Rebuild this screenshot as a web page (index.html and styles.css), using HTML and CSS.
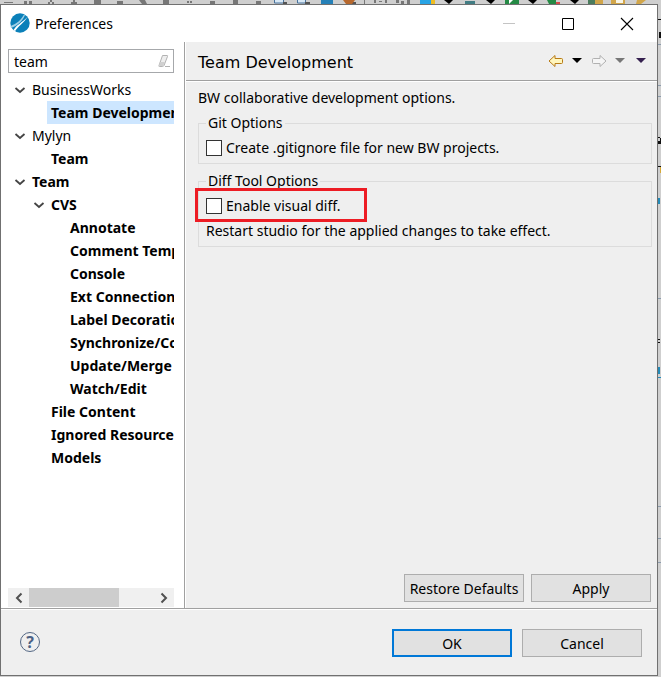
FILE: index.html
```html
<!DOCTYPE html>
<html lang="en">
<head>
<meta charset="utf-8">
<meta name="viewport" content="width=device-width, initial-scale=1">
<title>Preferences</title>
<link rel="stylesheet" href="styles.css">
</head>
<body>
<svg class="backdrop-tools" width="661" height="4" aria-hidden="true">
  <g fill="#777">
    <path d="M4 2h9v1H4zM24 1h3v3h-3zM29 1h3v3h-3zM50 0h2v2h-2zM48 2h2v2h-2zM52 2h2v2h-2zM73 0h2v2h-2zM71 2h6v2h-6zM94 0h7v4h-7zM117 1h6v3h-6zM139 0h6l2 4h-5zM163 0h6v4h-6zM187 1h2v2h-2zM190 1h2v2h-2zM210 1h5v3h-5zM233 0h5v4h-5zM256 1h5v3h-5z"/>
    <path d="M364 0h1v4h-1zM374 0h2v3h-2zM379 1h3v1h-3zM385 0h2v3h-2zM396 0h3v3h-3zM401 1h3v3h-3zM407 0h3v4h-3z"/>
  </g>
  <path fill="#d8e8f5" stroke="#47719b" d="M274.500-1h9v4h-9zM297.500-1h8v4h-8z"/>
  <path fill="#555" d="M283 2h4v2h-4zM305 2h5v2h-5zM351 2h5v2h-5z"/>
  <path fill="#2681b8" d="M321 0h12v4h-12z"/>
  <path fill="#b7682d" d="M343 0h12l-3 4h-6z"/>
  <path fill="#28a4e5" d="M420 0h11v4h-11z"/>
  <path fill="#efbd22" d="M431 0h4v4h-4z"/>
  <path fill="#000" d="M444 0h9l-4 4zM486 0h9l-4 4zM528 0h9l-4 4zM570 0h9l-4 4z"/>
  <path fill="#427d84" d="M465 1h10v3h-10z"/>
  <path fill="#258a45" d="M505 0h14v4h-14zM547 0h9v4h-7z"/>
  <path fill="#fff" d="M509 0h4l-4 4z"/>
  <path fill="#d64a4a" d="M556 2h4v2h-4z"/>
  <path fill="#4b7c5d" d="M588 0h7v4h-7z"/>
  <path fill="#d2a64a" d="M595 0h8v4h-8zM611 0h14v4h-14zM637 0h9l-5 4h-5z"/>
  <path fill="#f8f5e8" d="M616 0h7v3h-7z"/>
</svg>
<svg class="backdrop-side" width="3" height="677" aria-hidden="true">
  <path fill="#111" d="M0 19h3v1H0zM1 32h2v6H1zM0 137h2v1H0zM2 138h1v6H2zM0 141h2v3H0zM0 166h3v1H0zM0 339h2v1H0zM0 342h2v1H0z"/>
  <path fill="#8b9bac" d="M0 44h3v1H0zM0 85h3v1H0zM0 96h3v1H0zM0 298h3v1H0zM0 506h3v1H0zM0 538h3v1H0zM0 562h3v1H0z"/>
  <path fill="#238bb8" d="M0 198h2v6H0zM0 367h2v7H0zM0 377h3v1H0z"/>
  <path fill="#d6aa3a" d="M2 167h1v6H2z"/>
</svg>
<main class="dialog">
  <header class="titlebar">
    <svg class="app-icon" width="20" height="20" viewBox="0 0 20 20" aria-hidden="true">
      <circle cx="10" cy="10" r="9.700" fill="#0b80b9"/>
      <path fill="#9fcfe6" d="M.5 13C7 10.500 11 7 14 1.500L15 2C12.500 8 8 12.500 1 15z"/>
      <path fill="#fff" d="M3.500 17C6 12.500 12 9.500 17.500 4C14 10 8 13 5 18.300z"/>
    </svg>
    <h1 class="window-title">Preferences</h1>
    <div class="window-controls">
      <button type="button" aria-label="Minimize" disabled><svg width="14" height="14"><path stroke="#c4c4c4" d="M1 6.500h12"/></svg></button>
      <button type="button" aria-label="Maximize"><svg width="14" height="14"><path fill="none" stroke="#000" d="M1.500 1.500h11v11h-11z"/></svg></button>
      <button type="button" aria-label="Close"><svg width="14" height="14"><path stroke="#000" stroke-width="1.100" d="M1 1l12 12M13 1L1 13"/></svg></button>
    </div>
  </header>

  <div class="content">
    <nav class="sidebar" aria-label="Preference pages">
      <div class="search">
        <input type="text" value="team" aria-label="Filter preferences">
        <button type="button" class="clear" aria-label="Clear filter">
          <svg width="14" height="14" viewBox="0 0 14 14"><path fill="#eee" stroke="#b2b2b2" d="M5.500 1.500h4.500q1 0 .5 1L7 11.500q-.5 1-1.500 1H2.500q-1 0-.5-1z"/><path fill="#d0d0d0" d="M3 8h5l-2 4H2z"/><path stroke="#b2b2b2" d="M8 12.500h5"/></svg>
        </button>
      </div>
      <ul class="tree">
        <li><div class="row"><svg class="chevron" viewBox="0 0 16 10"><path d="M3.500 3L8 7l4.500-4"/></svg><span class="label plain">BusinessWorks</span></div>
          <ul>
            <li><div class="row leaf"><span class="label selected">Team Development</span></div></li>
          </ul>
        </li>
        <li><div class="row"><svg class="chevron" viewBox="0 0 16 10"><path d="M3.500 3L8 7l4.500-4"/></svg><span class="label plain">Mylyn</span></div>
          <ul>
            <li><div class="row leaf"><span class="label">Team</span></div></li>
          </ul>
        </li>
        <li><div class="row"><svg class="chevron" viewBox="0 0 16 10"><path d="M3.500 3L8 7l4.500-4"/></svg><span class="label">Team</span></div>
          <ul>
            <li><div class="row"><svg class="chevron" viewBox="0 0 16 10"><path d="M3.500 3L8 7l4.500-4"/></svg><span class="label">CVS</span></div>
              <ul>
                <li><div class="row leaf"><span class="label">Annotate</span></div></li>
                <li><div class="row leaf"><span class="label">Comment Templates</span></div></li>
                <li><div class="row leaf"><span class="label">Console</span></div></li>
                <li><div class="row leaf"><span class="label">Ext Connection</span></div></li>
                <li><div class="row leaf"><span class="label">Label Decorations</span></div></li>
                <li><div class="row leaf"><span class="label">Synchronize/Compare</span></div></li>
                <li><div class="row leaf"><span class="label">Update/Merge</span></div></li>
                <li><div class="row leaf"><span class="label">Watch/Edit</span></div></li>
              </ul>
            </li>
            <li><div class="row leaf"><span class="label">File Content</span></div></li>
            <li><div class="row leaf"><span class="label">Ignored Resources</span></div></li>
            <li><div class="row leaf"><span class="label">Models</span></div></li>
          </ul>
        </li>
      </ul>
      <div class="scrollbar">
        <button type="button" aria-label="Scroll left"><svg width="10" height="12"><path d="M7.500 1.500L3 6l4.500 4.500"/></svg></button>
        <div class="track"><div class="thumb"></div></div>
        <button type="button" aria-label="Scroll right"><svg width="10" height="12"><path d="M2.500 1.500L7 6l-4.500 4.500"/></svg></button>
      </div>
    </nav>

    <section class="page">
      <header class="page-header">
        <h2>Team Development</h2>
        <div class="history">
          <button type="button" aria-label="Back"><svg width="16" height="14"><path fill="#fff6bd" stroke="#b87b16" stroke-linejoin="round" d="M1 7l6-5.500v3h6.500q1 0 1 1v3q0 1-1 1H7v3z"/></svg></button>
          <button type="button" aria-label="Back history"><svg width="10" height="6"><path d="M0 0h10L5 5z"/></svg></button>
          <button type="button" aria-label="Forward" disabled><svg width="16" height="14"><path fill="#f5f5f5" stroke="#b1b1b1" stroke-linejoin="round" d="M15 7L9 1.500v3H2.500q-1 0-1 1v3q0 1 1 1H9v3z"/></svg></button>
          <button type="button" aria-label="Forward history" disabled><svg width="10" height="6"><path fill="#777" d="M0 0h10L5 5z"/></svg></button>
          <button type="button" aria-label="Menu"><svg width="10" height="6"><path fill="#35204f" d="M0 0h10L5 5z"/></svg></button>
        </div>
      </header>
      <div class="page-body">
        <p>BW collaborative development options.</p>
        <fieldset>
          <legend>Git Options</legend>
          <label class="check"><input type="checkbox">Create .gitignore file for new BW projects.</label>
        </fieldset>
        <fieldset>
          <legend>Diff Tool Options</legend>
          <label class="check highlighted"><input type="checkbox">Enable visual diff.</label>
          <p>Restart studio for the applied changes to take effect.</p>
        </fieldset>
      </div>
      <div class="page-actions">
        <button type="button" class="btn">Restore Defaults</button>
        <button type="button" class="btn">Apply</button>
      </div>
    </section>
  </div>

  <footer class="footer">
    <button type="button" class="help" aria-label="Help">?</button>
    <div class="footer-actions">
      <button type="button" class="btn primary">OK</button>
      <button type="button" class="btn">Cancel</button>
    </div>
  </footer>
</main>
</body>
</html>
```
FILE: styles.css
```css
* {
  box-sizing: border-box;
}

body {
  position: relative;
  display: flex;
  min-height: 100vh;
  margin: 0;
  padding: 4px 3px 1px 0;
  overflow: hidden;
  background: #cfcfcf;
  color: #000;
  font: 14px/20px "Noto Sans", "Open Sans", sans-serif;
}

button,
input {
  font: inherit;
  color: inherit;
}

button {
  padding: 0;
  border: 0;
  background: none;
}

svg {
  display: block;
  flex: none;
}

p,
h1,
h2,
ul {
  margin: 0;
  padding: 0;
}

.backdrop-tools {
  position: absolute;
  top: 0;
  left: 0;
}

.backdrop-side {
  position: absolute;
  top: 0;
  right: 0;
}

.dialog {
  position: relative;
  display: flex;
  flex: 1;
  flex-direction: column;
  min-width: 0;
  border: 1px solid #707070;
  background: #efefef;
}

.titlebar {
  display: flex;
  align-items: center;
  height: 37px;
  padding: 0 23px 0 9px;
  background: #fff;
}

.app-icon {
  margin-bottom: 2px;
}

.window-title {
  flex: 1;
  margin-left: 5px;
  font-size: 14px;
  font-weight: 400;
}

.window-controls {
  display: flex;
  gap: 45px;
}

.content {
  display: flex;
  flex: 1;
  min-height: 0;
}

.sidebar {
  display: flex;
  flex: none;
  flex-direction: column;
  width: 184px;
  padding: 7px 10px 1px 7px;
  border-right: 1px solid #a0a0a0;
  background: #fff;
}

.search {
  position: relative;
  margin-bottom: 5px;
}

.search input {
  display: block;
  width: 100%;
  height: 24px;
  padding: 0 24px 0 5px;
  border: 1px solid #a6a8ab;
  border-radius: 0;
  background: #fff;
}

.clear {
  position: absolute;
  top: 5px;
  right: 3px;
}

.tree {
  flex: 1;
  overflow: hidden;
  font-weight: 700;
}

.tree ul {
  padding-left: 19px;
}

.tree li {
  list-style: none;
}

.row {
  display: flex;
  align-items: center;
  height: 23px;
  padding-left: 4px;
  white-space: nowrap;
}

.leaf {
  padding-left: 20px;
}

.chevron {
  width: 16px;
  height: 10px;
  fill: none;
  stroke: #444;
  stroke-width: 1.800;
}

.label {
  flex: 1;
  padding-left: 4px;
  line-height: 23px;
}

.plain {
  font-weight: 400;
}

.selected {
  background: #cde6ff;
}

.scrollbar {
  display: flex;
  height: 19px;
  background: #f0f0f0;
}

.scrollbar button {
  display: grid;
  place-items: center;
  width: 21px;
}

.scrollbar path {
  fill: none;
  stroke: #505050;
  stroke-width: 2;
}

.track {
  flex: 1;
}

.thumb {
  width: 90px;
  height: 100%;
  background: #cdcdcd;
}

.page {
  display: flex;
  flex: 1;
  flex-direction: column;
  min-width: 0;
  border-left: 1px solid #fff;
}

.page-header {
  display: flex;
  align-items: center;
  justify-content: space-between;
  height: 39px;
  padding: 0 12px;
  border-bottom: 1px solid #a0a0a0;
  box-shadow: 0 1px #fff;
}

.page-header h2 {
  padding-top: 3px;
  font: 16px/20px "DejaVu Sans", sans-serif;
}

.history {
  display: flex;
  align-items: center;
  gap: 8px;
}

.history button:nth-child(3) {
  margin-left: 1px;
}

.history button:last-child {
  margin-left: 3px;
}

.history {
  margin-right: -1px;
}

.page-body {
  flex: 1;
  padding: 7px 5px 0 12px;
}

fieldset {
  min-width: 0;
  margin: 5px 0 6px;
  padding: 5px 7px;
  border: 1px solid #dcdcdc;
}

fieldset + fieldset {
  margin-top: 7px;
}

legend {
  padding: 0 2px;
}

.check {
  position: relative;
  display: flex;
  align-items: center;
  width: fit-content;
}

.check input {
  width: 16px;
  height: 16px;
  margin: 0 4px 0 0;
  border: 1px solid #333;
  background: #fff;
  appearance: none;
}

.check input:checked {
  background: #0078d7;
}

.check + p {
  margin-top: 5px;
}

.highlighted::after {
  position: absolute;
  inset: -8px -26px -6px -11px;
  border: 3px solid #ed1c24;
  content: "";
  pointer-events: none;
}

.page-actions {
  display: flex;
  justify-content: flex-end;
  gap: 7px;
  padding: 0 6px 6px;
}

.btn {
  width: 120px;
  height: 28px;
  padding-top: 1px;
  border: 1px solid #adadad;
  background: #e1e1e1;
}

.primary {
  border: 2px solid #0078d7;
}

.footer {
  display: flex;
  align-items: center;
  justify-content: space-between;
  height: 67px;
  padding: 2px 15px 0 19px;
  border-top: 1px solid #a0a0a0;
  box-shadow: inset 0 1px #fff;
}

.help {
  width: 20px;
  height: 20px;
  margin-bottom: 2px;
  border: 1px solid #536784;
  border-radius: 50%;
  color: #4b6184;
  font-size: 16px;
  font-weight: 700;
  line-height: 18px;
}

.footer-actions {
  display: flex;
  gap: 10px;
}
```
